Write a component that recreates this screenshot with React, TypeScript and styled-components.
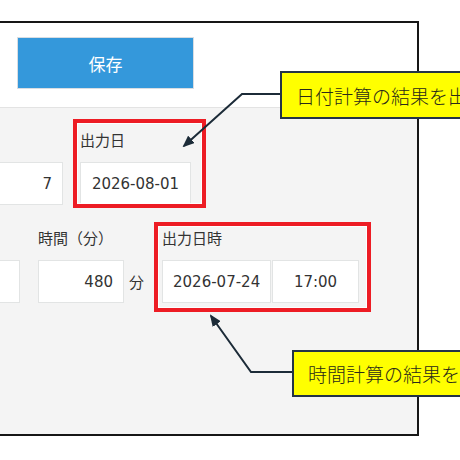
import React from "react";
import styled, { createGlobalStyle } from "styled-components";

const GlobalStyle = createGlobalStyle`
  html,
  body {
    margin: 0;
    padding: 0;
    background: #ffffff;
  }
  body {
    font-family: "DejaVu Sans", "Noto Sans CJK JP", sans-serif;
    color: #333333;
    overflow: hidden;
  }
`;

const SPage = styled.div`
  position: relative;
  width: 460px;
  height: 460px;
  padding-top: 21px;
  box-sizing: border-box;
  overflow: hidden;
`;

// the form window, its left part runs off the picture
const SFrame = styled.div`
  display: flex;
  flex-direction: column;
  box-sizing: border-box;
  width: 479px;
  height: 415px;
  margin-left: -60px;
  border: 2px solid #161616;
  background: #ffffff;
  overflow: hidden;
`;

const SHeader = styled.div`
  display: flex;
  padding: 14px 0 18px 75px;
  border-bottom: 1px solid #e3e3e3;
`;

const SSaveButton = styled.button`
  width: 177px;
  height: 52px;
  box-sizing: border-box;
  background: #3498db;
  border: 1px solid #d8dde2;
  color: #ffffff;
  font-family: "Noto Sans CJK JP", sans-serif;
  font-size: 17px;
  cursor: pointer;
`;

const SFormBody = styled.div`
  flex: 1;
  display: flex;
  flex-direction: column;
  gap: 24px;
  padding: 23px 0 0 18px;
  background: #f4f4f4;
`;

const SRow = styled.div<{ $gap: number }>`
  display: flex;
  align-items: flex-end;
  gap: ${(p) => p.$gap}px;
`;

const SField = styled.div`
  display: flex;
  flex-direction: column;
  gap: 11px;
`;

const SLabel = styled.div`
  height: 20px;
  font-size: 15px;
  line-height: 20px;
  white-space: nowrap;
  color: #333333;
`;

const SInputLine = styled.div`
  display: flex;
  align-items: center;
  gap: 1px;
`;

const SInput = styled.input<{ $w: number; $align?: "center" | "right" }>`
  width: ${(p) => p.$w}px;
  height: 43px;
  box-sizing: border-box;
  padding: 0 10px;
  border: 1px solid #e2e4e4;
  background: #ffffff;
  color: #333333;
  font-family: "DejaVu Sans", "Noto Sans CJK JP", sans-serif;
  font-size: 15px;
  text-align: ${(p) => p.$align ?? "center"};
  outline: none;
`;

const SUnit = styled.span`
  margin-left: 4px;
  font-size: 15px;
  color: #333333;
`;

const SMarker = styled.div<{ $x: number; $y: number; $w: number; $h: number }>`
  position: absolute;
  left: ${(p) => p.$x}px;
  top: ${(p) => p.$y}px;
  width: ${(p) => p.$w}px;
  height: ${(p) => p.$h}px;
  box-sizing: border-box;
  border: 4px solid #ed1c24;
  box-shadow: inset 0 0 0 1px rgba(255, 255, 255, 0.85);
`;

const SCallout = styled.div<{ $x: number; $y: number; $h: number }>`
  position: absolute;
  left: ${(p) => p.$x}px;
  top: ${(p) => p.$y}px;
  height: ${(p) => p.$h}px;
  box-sizing: border-box;
  display: flex;
  align-items: center;
  padding: 0 14px;
  background: #ffff00;
  border: 2px solid #243447;
  font-family: "Noto Sans CJK JP", sans-serif;
  font-size: 19px;
  font-weight: 300;
  color: #2a2a1a;
  white-space: nowrap;
`;

const SArrows = styled.svg`
  position: absolute;
  left: 0;
  top: 0;
  pointer-events: none;
`;

export default function App() {
  return (
    <>
      <GlobalStyle />
      <SPage>
        <SFrame>
          <SHeader>
            <SSaveButton>保存</SSaveButton>
          </SHeader>
          <SFormBody>
            <SRow $gap={17}>
              <SField>
                <SInput $w={103} $align="right" readOnly value="7" />
              </SField>
              <SField>
                <SLabel>出力日</SLabel>
                <SInput $w={111} readOnly value="2026-08-01" />
              </SField>
            </SRow>
            <SRow $gap={18}>
              <SField>
                <SInput $w={60} readOnly value="" />
              </SField>
              <SField>
                <SLabel>時間（分）</SLabel>
                <SInputLine>
                  <SInput $w={86} $align="right" readOnly value="480" />
                  <SUnit>分</SUnit>
                </SInputLine>
              </SField>
              <SField>
                <SLabel>出力日時</SLabel>
                <SInputLine>
                  <SInput $w={109} readOnly value="2026-07-24" />
                  <SInput $w={87} readOnly value="17:00" />
                </SInputLine>
              </SField>
            </SRow>
          </SFormBody>
        </SFrame>

        <SMarker $x={73} $y={119} $w={133} $h={89} />
        <SMarker $x={154} $y={222} $w={217} $h={90} />

        <SArrows width={460} height={460} viewBox="0 0 460 460">
          <defs>
            <marker id="head" markerWidth="12" markerHeight="10" refX="10" refY="5" orient="auto" markerUnits="userSpaceOnUse">
              <path d="M0 0 L12 5 L0 10 Z" fill="#1c2b38" />
            </marker>
          </defs>
          <polyline points="282,94 242,94 184,146" fill="none" stroke="#1c2b38" strokeWidth={2} markerEnd="url(#head)" />
          <polyline points="294,372 251,372 211,316" fill="none" stroke="#1c2b38" strokeWidth={2} markerEnd="url(#head)" />
        </SArrows>

        <SCallout $x={280} $y={71} $h={48}>日付計算の結果を出力日に表示</SCallout>
        <SCallout $x={292} $y={350} $h={47}>時間計算の結果を出力日時に表示</SCallout>
      </SPage>
    </>
  );
}
